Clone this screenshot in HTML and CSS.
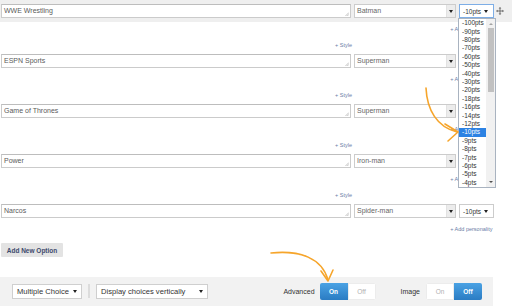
FILE: index.html
```html
<!DOCTYPE html>
<html>
<head>
<meta charset="utf-8">
<link rel="stylesheet" href="styles.css">
</head>
<body>
<div class="page">
  <div class="options">
    <div class="opt opt-active">
      <div class="line">
        <div class="field">WWE Wrestling<svg class="grip" width="4" height="4" viewBox="0 0 4 4"><path d="M0.5 4L4 0.5M2.3 4L4 2.3" stroke="#999" stroke-width="0.6"/></svg></div>
        <div class="sel"><span class="sel-text">Batman</span><span class="sel-btn"></span></div>
        <div class="pts pts-focus"><span class="pts-text">-10pts</span><span class="caret"></span></div>
        <svg class="move" width="8" height="8" viewBox="0 0 9 9"><path d="M4.5 1.5v6M1.5 4.5h6" stroke="#555" stroke-width="0.9"/><path d="M4.5 0L3 1.8h3zM4.5 9L3 7.2h3zM0 4.5L1.8 3v3zM9 4.5L7.2 3v3z" fill="#555"/></svg>
      </div>
      <div class="personality">+ Add personality</div>
      <div class="style-link">+ Style</div>
    </div>
    <div class="opt">
      <div class="line">
        <div class="field">ESPN Sports<svg class="grip" width="4" height="4" viewBox="0 0 4 4"><path d="M0.5 4L4 0.5M2.3 4L4 2.3" stroke="#999" stroke-width="0.6"/></svg></div>
        <div class="sel"><span class="sel-text">Superman</span><span class="sel-btn"></span></div>
        <div class="pts"><span class="pts-text">-10pts</span><span class="caret"></span></div>
      </div>
      <div class="personality">+ Add personality</div>
      <div class="style-link">+ Style</div>
    </div>
    <div class="opt">
      <div class="line">
        <div class="field">Game of Thrones<svg class="grip" width="4" height="4" viewBox="0 0 4 4"><path d="M0.5 4L4 0.5M2.3 4L4 2.3" stroke="#999" stroke-width="0.6"/></svg></div>
        <div class="sel"><span class="sel-text">Superman</span><span class="sel-btn"></span></div>
        <div class="pts"><span class="pts-text">-10pts</span><span class="caret"></span></div>
      </div>
      <div class="personality">+ Add personality</div>
      <div class="style-link">+ Style</div>
    </div>
    <div class="opt">
      <div class="line">
        <div class="field">Power<svg class="grip" width="4" height="4" viewBox="0 0 4 4"><path d="M0.5 4L4 0.5M2.3 4L4 2.3" stroke="#999" stroke-width="0.6"/></svg></div>
        <div class="sel"><span class="sel-text">Iron-man</span><span class="sel-btn"></span></div>
        <div class="pts"><span class="pts-text">-10pts</span><span class="caret"></span></div>
      </div>
      <div class="personality">+ Add personality</div>
      <div class="style-link">+ Style</div>
    </div>
    <div class="opt opt-last">
      <div class="line">
        <div class="field">Narcos<svg class="grip" width="4" height="4" viewBox="0 0 4 4"><path d="M0.5 4L4 0.5M2.3 4L4 2.3" stroke="#999" stroke-width="0.6"/></svg></div>
        <div class="sel"><span class="sel-text">Spider-man</span><span class="sel-btn"></span></div>
        <div class="pts"><span class="pts-text">-10pts</span><span class="caret"></span></div>
      </div>
      <div class="personality">+ Add personality</div>
    </div>
  </div>

  <div class="add-row"><button class="add-btn">Add New Option</button></div>

  <div class="bar">
    <div class="bar-sel bar-sel-type"><span>Multiple Choice</span><span class="caret dark"></span></div>
    <div class="sep"></div>
    <div class="bar-sel bar-sel-display"><span>Display choices vertically</span><span class="caret dark"></span></div>
    <div class="bar-right">
      <span class="bar-label">Advanced</span>
      <div class="toggle"><span class="tg tg-on">On</span><span class="tg tg-off">Off</span></div>
      <span class="bar-label bar-label-image">Image</span>
      <div class="toggle"><span class="tg tg-off">On</span><span class="tg tg-on">Off</span></div>
    </div>
  </div>

  <div class="dropdown">
    <ul class="dd-list">
      <li>-100pts</li><li>-90pts</li><li>-80pts</li><li>-70pts</li><li>-60pts</li>
      <li>-50pts</li><li>-40pts</li><li>-30pts</li><li>-20pts</li><li>-18pts</li>
      <li>-16pts</li><li>-14pts</li><li>-12pts</li><li class="dd-hl">-10pts</li><li>-9pts</li>
      <li>-8pts</li><li>-7pts</li><li>-6pts</li><li>-5pts</li><li>-4pts</li>
    </ul>
    <div class="dd-scroll">
      <span class="sb-up"></span>
      <span class="sb-thumb"></span>
      <span class="sb-down"></span>
    </div>
  </div>

  <svg class="arrows" width="512" height="306" viewBox="0 0 512 306">
    <g fill="none" stroke="#f6a52b" stroke-width="1.6" stroke-linecap="round" stroke-linejoin="round">
      <path d="M426 88 C427 110 437 127 457 132"/>
      <path d="M445 124 L458 132 L448 141"/>
      <path d="M271 253 C300 250 322 258 328 280"/>
      <path d="M321 271 L328 281 L333 270"/>
    </g>
  </svg>
</div>
</body>
</html>
```

FILE: styles.css
```css
* { box-sizing: border-box; margin: 0; padding: 0; }

body {
  margin: 0;
  width: 512px;
  height: 306px;
  overflow: hidden;
  background: #fff;
  font-family: "Liberation Sans", Arial, sans-serif;
  color: #555;
}

.page { position: relative; width: 512px; height: 306px; }

.options { display: flex; flex-direction: column; }

.opt { display: flex; flex-direction: column; height: 50px; }
.opt-last { height: 33px; }

.line {
  display: flex;
  align-items: center;
  height: 22px;
  padding-left: 1px;
}
.opt-active .line { background: #efefef; }

.field {
  position: relative;
  width: 350px;
  height: 14px;
  border: 1px solid #cbcbcb;
  border-top-color: #bdbdbd;
  background: #fff;
  font-size: 7px;
  line-height: 12px;
  padding-left: 2px;
  color: #5a5a5a;
}
.grip { position: absolute; right: 1px; bottom: 1px; }

.sel {
  display: flex;
  width: 102px;
  height: 14px;
  margin-left: 3px;
  border: 1px solid #cccccc;
  background: #fff;
}
.sel-text {
  flex: 1;
  font-size: 7px;
  line-height: 12px;
  padding-left: 2px;
  color: #666;
}
.sel-btn {
  width: 9px;
  background: #ececec;
  border-left: 1px solid #e2e2e2;
  display: flex;
  align-items: center;
  justify-content: center;
}
.sel-btn::after {
  content: "";
  border-left: 2px solid transparent;
  border-right: 2px solid transparent;
  border-top: 3px solid #222;
}

.pts {
  display: flex;
  align-items: center;
  width: 35px;
  height: 14px;
  margin-left: 3px;
  border: 1px solid #cccccc;
  background: #fff;
  padding-left: 3px;
}
.pts-focus { border-color: #7eaee6; }
.pts-text { flex: 1; font-size: 6.5px; color: #333; }

.caret {
  width: 0;
  height: 0;
  margin-right: 5px;
  border-left: 2px solid transparent;
  border-right: 2px solid transparent;
  border-top: 3px solid #222;
}

.move { margin-left: 2px; flex: none; }

.personality {
  margin-top: 3px;
  height: 8px;
  line-height: 8px;
  font-size: 5.5px;
  color: #6a7ca6;
  text-align: right;
  padding-right: 19.5px;
}
.style-link {
  margin-top: 8px;
  width: 352px;
  height: 8px;
  line-height: 8px;
  font-size: 5.5px;
  color: #6a7ca6;
  text-align: right;
}

.add-row { margin-top: 10px; padding-left: 1px; }
.add-btn {
  display: block;
  width: 62px;
  height: 14px;
  border: none;
  border-radius: 1px;
  background: #e3e3e3;
  font-family: "Liberation Sans", Arial, sans-serif;
  font-weight: bold;
  font-size: 6.5px;
  color: #3d4a6c;
  text-align: center;
}

.bar {
  margin-top: 20px;
  width: 493px;
  height: 29px;
  background: #f2f2f2;
  display: flex;
  align-items: center;
  padding: 0 11px 1px 12px;
}
.bar-sel {
  display: flex;
  align-items: center;
  height: 15px;
  border: 1px solid #cfcfcf;
  background: #fff;
  padding-left: 4px;
  font-size: 7.6px;
  color: #333;
}
.bar-sel span:first-child { flex: 1; }
.bar-sel .caret { margin-right: 4px; }
.bar-sel-type { width: 70px; }
.bar-sel-display { width: 112px; }
.sep { width: 2px; height: 14px; margin: 0 6px; background: #dcdcdc; }

.bar-right { margin-left: auto; display: flex; align-items: center; }
.bar-label { font-size: 7px; color: #333; margin-right: 5px; }
.bar-label-image { margin-left: 25px; margin-right: 6px; }

.toggle {
  display: flex;
  height: 17px;
  border-radius: 2px;
  overflow: hidden;
  margin-top: 1px;
}
.tg {
  width: 28px;
  display: flex;
  align-items: center;
  justify-content: center;
  font-size: 6.5px;
}
.tg-on {
  background: linear-gradient(#4aa2e4, #2b7cc3);
  color: #fff;
  font-weight: bold;
}
.tg-off {
  background: #fff;
  color: #b0b0b0;
  border: 1px solid #ececec;
}

.dropdown {
  position: absolute;
  left: 458px;
  top: 18px;
  width: 38px;
  height: 170px;
  border: 1px solid #a9b3c0;
  background: #fff;
  display: flex;
}
.dd-list { list-style: none; width: 27px; padding-top: 0.3px; }
.dd-list li {
  height: 8.4px;
  line-height: 8.4px;
  font-size: 6.5px;
  color: #333;
  padding-left: 3px;
  white-space: nowrap;
}
.dd-list li.dd-hl { background: #2c82e3; color: #fff; }

.dd-scroll {
  margin-left: auto;
  width: 9px;
  background: #f1f1f1;
  display: flex;
  flex-direction: column;
  align-items: center;
}
.sb-up {
  margin-top: 4px;
  border-left: 2px solid transparent;
  border-right: 2px solid transparent;
  border-bottom: 2.5px solid #a3a3a3;
}
.sb-thumb {
  margin-top: 2.5px;
  width: 6px;
  height: 64px;
  background: #c1c1c1;
}
.sb-down {
  margin-top: auto;
  margin-bottom: 4px;
  border-left: 2px solid transparent;
  border-right: 2px solid transparent;
  border-top: 2.5px solid #505050;
}

.arrows { position: absolute; left: 0; top: 0; pointer-events: none; }
```
